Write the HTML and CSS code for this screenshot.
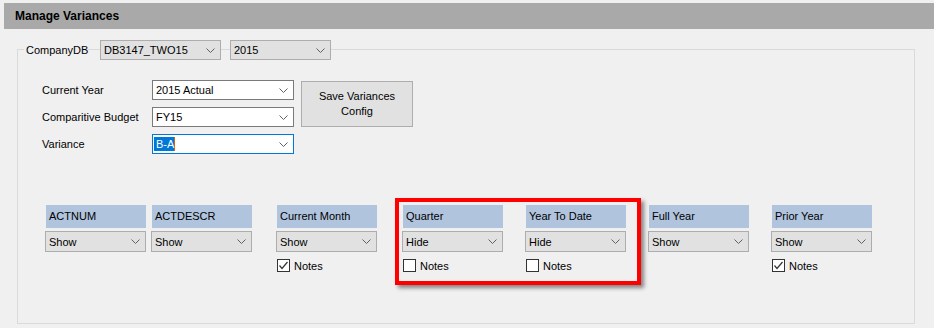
FILE: index.html
```html
<!DOCTYPE html>
<html>
<head>
<meta charset="utf-8">
<link rel="stylesheet" href="styles.css">
</head>
<body>
<div class="titlebar">Manage Variances</div>
<div class="group">
  <div class="group-head">
    <span class="group-label">CompanyDB</span>
    <div class="combo gray combo-db"><span>DB3147_TWO15</span><svg class="chev" width="9" height="5" viewBox="0 0 9 5"><polyline points="0.5,0.5 4.5,4.5 8.5,0.5"/></svg></div>
    <div class="combo gray combo-yr"><span>2015</span><svg class="chev" width="9" height="5" viewBox="0 0 9 5"><polyline points="0.5,0.5 4.5,4.5 8.5,0.5"/></svg></div>
  </div>
  <div class="settings">
    <div class="fields">
      <span class="flabel">Current Year</span>
      <div class="combo white"><span>2015 Actual</span><svg class="chev" width="9" height="5" viewBox="0 0 9 5"><polyline points="0.5,0.5 4.5,4.5 8.5,0.5"/></svg></div>
      <span class="flabel">Comparitive Budget</span>
      <div class="combo white"><span>FY15</span><svg class="chev" width="9" height="5" viewBox="0 0 9 5"><polyline points="0.5,0.5 4.5,4.5 8.5,0.5"/></svg></div>
      <span class="flabel">Variance</span>
      <div class="combo white focused"><span class="sel">B-A</span><svg class="chev" width="9" height="5" viewBox="0 0 9 5"><polyline points="0.5,0.5 4.5,4.5 8.5,0.5"/></svg></div>
    </div>
    <button class="save">Save Variances<br>Config</button>
  </div>
  <div class="columns">
    <div class="col">
      <div class="col-head">ACTNUM</div>
      <div class="combo gray col-combo"><span>Show</span><svg class="chev" width="9" height="5" viewBox="0 0 9 5"><polyline points="0.5,0.5 4.5,4.5 8.5,0.5"/></svg></div>
    </div>
    <div class="col c2">
      <div class="col-head">ACTDESCR</div>
      <div class="combo gray col-combo"><span>Show</span><svg class="chev" width="9" height="5" viewBox="0 0 9 5"><polyline points="0.5,0.5 4.5,4.5 8.5,0.5"/></svg></div>
    </div>
    <div class="col c3">
      <div class="col-head">Current Month</div>
      <div class="combo gray col-combo"><span>Show</span><svg class="chev" width="9" height="5" viewBox="0 0 9 5"><polyline points="0.5,0.5 4.5,4.5 8.5,0.5"/></svg></div>
      <div class="notes"><span class="cb"><svg width="11" height="11" viewBox="0 0 11 11"><polyline points="1.5,5.5 4,8.5 9.5,2"/></svg></span><span>Notes</span></div>
    </div>
    <div class="col c4">
      <div class="col-head">Quarter</div>
      <div class="combo gray col-combo"><span>Hide</span><svg class="chev" width="9" height="5" viewBox="0 0 9 5"><polyline points="0.5,0.5 4.5,4.5 8.5,0.5"/></svg></div>
      <div class="notes"><span class="cb"></span><span>Notes</span></div>
    </div>
    <div class="col c5">
      <div class="col-head">Year To Date</div>
      <div class="combo gray col-combo"><span>Hide</span><svg class="chev" width="9" height="5" viewBox="0 0 9 5"><polyline points="0.5,0.5 4.5,4.5 8.5,0.5"/></svg></div>
      <div class="notes"><span class="cb"></span><span>Notes</span></div>
    </div>
    <div class="col c6">
      <div class="col-head">Full Year</div>
      <div class="combo gray col-combo"><span>Show</span><svg class="chev" width="9" height="5" viewBox="0 0 9 5"><polyline points="0.5,0.5 4.5,4.5 8.5,0.5"/></svg></div>
    </div>
    <div class="col c7">
      <div class="col-head">Prior Year</div>
      <div class="combo gray col-combo"><span>Show</span><svg class="chev" width="9" height="5" viewBox="0 0 9 5"><polyline points="0.5,0.5 4.5,4.5 8.5,0.5"/></svg></div>
      <div class="notes"><span class="cb"><svg width="11" height="11" viewBox="0 0 11 11"><polyline points="1.5,5.5 4,8.5 9.5,2"/></svg></span><span>Notes</span></div>
    </div>
    <div class="callout"></div>
  </div>
</div>
</body>
</html>
```
FILE: styles.css
```css
* { box-sizing: border-box; }
html, body { margin: 0; padding: 0; }
body {
  background: #f0f0f0;
  font-family: "Liberation Sans", Arial, sans-serif;
  font-size: 11px;
  color: #000;
  width: 934px;
  height: 328px;
  overflow: hidden;
}
.titlebar {
  margin: 3px 0 0 4px;
  height: 26px;
  line-height: 26px;
  background: #a9a9a9;
  font-weight: bold;
  font-size: 12px;
  padding-left: 11px;
}
.group {
  margin: 20px 19px 0 17px;
  height: 275px;
  border: 1px solid #dadada;
}
.group-head {
  display: flex;
  align-items: center;
  margin-top: -10px;
  height: 20px;
  padding-left: 6px;
}
.group-label {
  background: #f0f0f0;
  width: 64px;
  padding: 0 2px;
  line-height: 20px;
}
.combo {
  display: flex;
  align-items: center;
  justify-content: space-between;
  height: 20px;
  padding: 0 5px 0 3px;
  border: 1px solid #adadad;
  white-space: nowrap;
}
.combo.gray { background: #e1e1e1; }
.combo.white { background: #fff; border-color: #7a7a7a; }
.combo.focused { border-color: #0078d7; }
.chev { flex: none; }
.chev polyline { fill: none; stroke: #606060; stroke-width: 1; }
.combo-db { margin-left: 12px; width: 121px; }
.combo-yr { margin-left: 9px; width: 101px; }
.sel {
  background: #0078d7;
  color: #fff;
  margin-left: -2px;
  padding-left: 2px;
  line-height: 14px;
  border-right: 1px solid #c8641e;
}
.settings {
  display: flex;
  align-items: flex-start;
  margin-top: 20px;
  padding-left: 24px;
}
.fields {
  display: grid;
  grid-template-columns: 110px 142px;
  grid-auto-rows: 20px;
  row-gap: 7px;
  align-items: center;
}
.save {
  margin: 1px 0 0 7px;
  width: 112px;
  height: 46px;
  background: #e1e1e1;
  border: 1px solid #adadad;
  font-family: inherit;
  font-size: 11px;
  color: #000;
  line-height: 15px;
  padding: 0;
}
.columns {
  position: relative;
  display: flex;
  align-items: flex-start;
  margin-top: 51px;
  padding-left: 27px;
}
.col { width: 101px; flex: none; }
.c2 { margin-left: 5px; }
.c3 { margin-left: 24px; }
.c4 { margin-left: 25px; }
.c5 { margin-left: 22px; }
.c6 { margin-left: 22px; }
.c7 { margin-left: 22px; }
.col-head {
  margin-left: 1px;
  width: 100px;
  height: 23px;
  line-height: 23px;
  padding-left: 3px;
  background: #b0c4de;
}
.col-combo { margin-top: 3px; height: 21px; }
.notes {
  display: flex;
  align-items: center;
  gap: 4px;
  margin: 7px 0 0 1px;
  height: 13px;
}
.cb {
  width: 13px;
  height: 13px;
  border: 1px solid #333;
  background: #fff;
  display: flex;
}
.cb polyline { fill: none; stroke: #333; stroke-width: 1.2; }
.callout {
  position: absolute;
  left: 377px;
  top: -7px;
  width: 246px;
  height: 87px;
  border: 4px solid #ff0000;
  box-shadow: 3px 3px 4px rgba(0, 0, 0, 0.45);
}
```
